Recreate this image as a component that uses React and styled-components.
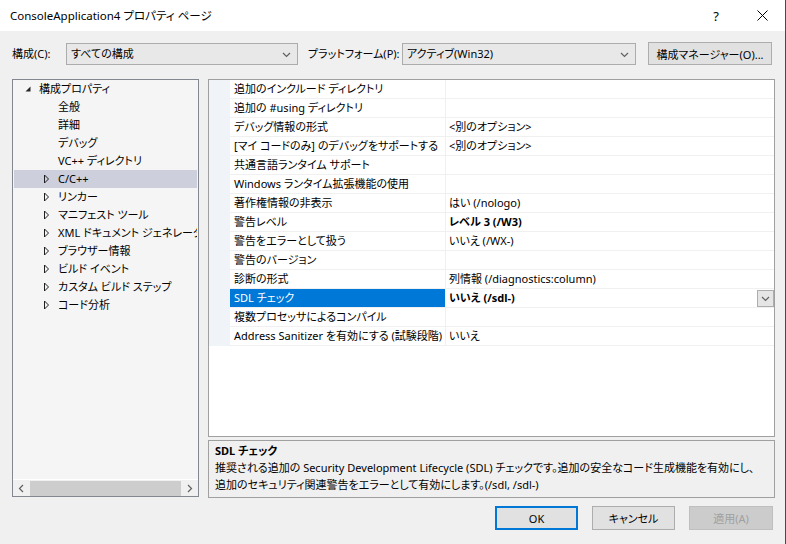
import React from "react";
import styled, { createGlobalStyle, css } from "styled-components";

const GlobalStyle = createGlobalStyle`
  html, body { margin: 0; padding: 0; background: #f0f0f0; }
  body {
    font-family: "Noto Sans", "Noto Sans CJK JP", sans-serif;
    font-size: 11px;
    color: #000;
    font-feature-settings: "palt";
  }
  * { box-sizing: border-box; }
`;

const Window = styled.div`
  width: 786px;
  height: 544px;
  background: #f0f0f0;
  display: flex;
  flex-direction: column;
  border-right: 1px solid #4a4a4a;
  overflow: hidden;
`;

const TitleBar = styled.div`
  height: 31px;
  background: #ffffff;
  display: flex;
  align-items: center;
  padding-left: 10px;
`;

const TitleText = styled.div`
  flex: 1;
  font-size: 11.5px;
  line-height: 16px;
`;

const TitleButton = styled.div`
  width: 46px;
  height: 31px;
  display: flex;
  align-items: center;
  justify-content: center;
  font-size: 13px;
  color: #000;
`;

const ConfigRow = styled.div`
  height: 48px;
  display: flex;
  align-items: flex-start;
  padding: 12px 12px 0 12px;
`;

const Label = styled.div`
  line-height: 22px;
  height: 22px;
  width: ${(p) => p.$w}px;
  white-space: nowrap;
`;

const Combo = styled.div`
  width: ${(p) => p.$w}px;
  height: 22px;
  background: #e8e8e8;
  border: 1px solid #acacac;
  display: flex;
  align-items: center;
  padding: 0 6px 0 4px;
  margin-right: ${(p) => p.$mr}px;
  flex: none;
`;

const ComboText = styled.div`
  flex: 1;
  line-height: 20px;
`;

const PushButton = styled.button`
  font: inherit;
  font-size: 11px;
  width: ${(p) => p.$w}px;
  height: ${(p) => p.$h || 24}px;
  margin-top: ${(p) => p.$mt || 0}px;
  background: #e1e1e1;
  border: 1px solid #adadad;
  color: #000;
  padding: 0;
  display: flex;
  align-items: center;
  justify-content: center;
  white-space: nowrap;
  flex: none;
  ${(p) =>
    p.$default &&
    css`
      border: 2px solid #0078d7;
    `}
  ${(p) =>
    p.$disabled &&
    css`
      background: #cccccc;
      border: 1px solid #bfbfbf;
      color: #a0a0a0;
    `}
`;

const Main = styled.div`
  height: 419px;
  display: flex;
  padding: 0 12px;
  gap: 9px;
`;

const TreePanel = styled.div`
  width: 187px;
  flex: none;
  height: 418px;
  border: 1px solid #828790;
  background: #f5f5f5;
  display: flex;
  flex-direction: column;
`;

const TreeList = styled.div`
  flex: 1;
  padding: 0 1px;
  overflow: hidden;
`;

const TreeRow = styled.div`
  height: 18px;
  display: flex;
  align-items: center;
  padding-left: ${(p) => 10 + p.$level * 19}px;
  background: ${(p) => (p.$selected ? "#cdd0dc" : "transparent")};
  white-space: nowrap;
  overflow: hidden;
`;

const Expander = styled.div`
  width: 15px;
  height: 18px;
  flex: none;
  display: flex;
  align-items: center;
`;

const TreeText = styled.span`
  line-height: 18px;
`;

const HScroll = styled.div`
  height: 17px;
  border-top: 1px solid #ffffff;
  background: #f0f0f0;
  display: flex;
  align-items: center;
`;

const ScrollArrow = styled.div`
  width: 17px;
  height: 16px;
  display: flex;
  align-items: center;
  justify-content: center;
  flex: none;
`;

const ScrollThumb = styled.div`
  flex: 1;
  height: 15px;
  background: #cdcdcd;
`;

const RightColumn = styled.div`
  width: 567px;
  flex: none;
  min-width: 0;
  display: flex;
  flex-direction: column;
  gap: 3px;
`;

const Grid = styled.div`
  height: 358px;
  border: 1px solid #a0a0a0;
  background: #ffffff;
  display: flex;
  flex-direction: column;
  overflow: hidden;
`;

const GridRow = styled.div`
  display: grid;
  grid-template-columns: 21px 216px minmax(0, 1fr);
  height: 19px;
`;

const MarginCell = styled.div`
  background: #f0f4f9;
`;

const Cell = styled.div`
  border-bottom: 1px solid #f0f0f0;
  line-height: 18px;
  white-space: nowrap;
  overflow: hidden;
  display: flex;
  align-items: center;
  min-width: 0;
`;

const NameCell = styled(Cell)`
  padding-left: 4px;
  border-right: 1px solid #f0f0f0;
  background: ${(p) => (p.$selected ? "#0078d7" : "#ffffff")};
  color: ${(p) => (p.$selected ? "#ffffff" : "#000000")};
`;

const ValueCell = styled(Cell)`
  padding-left: 3px;
  font-weight: ${(p) => (p.$bold ? 700 : 400)};
`;

const ValueText = styled.span`
  flex: 1;
`;

const DropButton = styled.div`
  width: 17px;
  height: 17px;
  background: #e5e5e5;
  border: 1px solid #adadad;
  display: flex;
  align-items: center;
  justify-content: center;
  flex: none;
`;

const Description = styled.div`
  height: 58px;
  border: 1px solid #a0a0a0;
  background: #f0f0f0;
  padding: 1px 6px;
  line-height: 17px;
  white-space: nowrap;
  overflow: hidden;
`;

const DescTitle = styled.div`
  font-weight: 700;
`;

const Footer = styled.div`
  display: flex;
  justify-content: flex-end;
  gap: 14px;
  padding: 8px 12px 0 0;
`;

const Chevron = ({ dir = "down", size = 8, color = "#606060" }) => {
  const d =
    dir === "down"
      ? "M1 3 L4.5 6.5 L8 3"
      : dir === "left"
      ? "M6 1 L2.5 4.5 L6 8"
      : "M3 1 L6.5 4.5 L3 8";
  return (
    <svg width={size + 1} height={size + 1} viewBox="0 0 9 9">
      <path d={d} fill="none" stroke={color} strokeWidth="1.2" />
    </svg>
  );
};

const ExpandedGlyph = () => (
  <svg width="8" height="8" viewBox="0 0 8 8">
    <path d="M6.5 1.5 L6.5 6.5 L1.5 6.5 Z" fill="#262626" />
  </svg>
);

const CollapsedGlyph = () => (
  <svg width="7" height="10" viewBox="0 0 7 10">
    <path d="M1.5 1 L5.5 5 L1.5 9 Z" fill="none" stroke="#1e1e1e" strokeWidth="1" />
  </svg>
);

const treeItems = [
  { text: "構成プロパティ", level: 0, exp: "open" },
  { text: "全般", level: 1 },
  { text: "詳細", level: 1 },
  { text: "デバッグ", level: 1 },
  { text: "VC++ ディレクトリ", level: 1 },
  { text: "C/C++", level: 1, exp: "closed", selected: true },
  { text: "リンカー", level: 1, exp: "closed" },
  { text: "マニフェスト ツール", level: 1, exp: "closed" },
  { text: "XML ドキュメント ジェネレーター", level: 1, exp: "closed" },
  { text: "ブラウザー情報", level: 1, exp: "closed" },
  { text: "ビルド イベント", level: 1, exp: "closed" },
  { text: "カスタム ビルド ステップ", level: 1, exp: "closed" },
  { text: "コード分析", level: 1, exp: "closed" },
];

const props = [
  { name: "追加のインクルード ディレクトリ", value: "" },
  { name: "追加の #using ディレクトリ", value: "" },
  { name: "デバッグ情報の形式", value: "<別のオプション>" },
  { name: "[マイ コードのみ] のデバッグをサポートする", value: "<別のオプション>" },
  { name: "共通言語ランタイム サポート", value: "" },
  { name: "Windows ランタイム拡張機能の使用", value: "" },
  { name: "著作権情報の非表示", value: "はい (/nologo)" },
  { name: "警告レベル", value: "レベル 3 (/W3)", bold: true },
  { name: "警告をエラーとして扱う", value: "いいえ (/WX-)" },
  { name: "警告のバージョン", value: "" },
  { name: "診断の形式", value: "列情報 (/diagnostics:column)" },
  { name: "SDL チェック", value: "いいえ (/sdl-)", bold: true, selected: true },
  { name: "複数プロセッサによるコンパイル", value: "" },
  { name: "Address Sanitizer を有効にする (試験段階)", value: "いいえ" },
];

export default function App() {
  return (
    <>
      <GlobalStyle />
      <Window>
        <TitleBar>
          <TitleText>ConsoleApplication4 プロパティ ページ</TitleText>
          <TitleButton>?</TitleButton>
          <TitleButton>
            <svg width="11" height="11" viewBox="0 0 11 11">
              <path d="M0.5 0.5 L10.5 10.5 M10.5 0.5 L0.5 10.5" stroke="#000" strokeWidth="1" />
            </svg>
          </TitleButton>
        </TitleBar>

        <ConfigRow>
          <Label $w={54}>構成(C):</Label>
          <Combo $w={232} $mr={10}>
            <ComboText>すべての構成</ComboText>
            <Chevron dir="down" />
          </Combo>
          <Label $w={94}>プラットフォーム(P):</Label>
          <Combo $w={234} $mr={12}>
            <ComboText>アクティブ(Win32)</ComboText>
            <Chevron dir="down" />
          </Combo>
          <PushButton $w={124} $h={23} $mt={-1}>構成マネージャー(O)...</PushButton>
        </ConfigRow>

        <Main>
          <TreePanel>
            <TreeList>
              {treeItems.map((t, i) => (
                <TreeRow key={i} $level={t.level} $selected={t.selected}>
                  <Expander>
                    {t.exp === "open" && <ExpandedGlyph />}
                    {t.exp === "closed" && <CollapsedGlyph />}
                  </Expander>
                  <TreeText>{t.text}</TreeText>
                </TreeRow>
              ))}
            </TreeList>
            <HScroll>
              <ScrollArrow>
                <Chevron dir="left" />
              </ScrollArrow>
              <ScrollThumb />
              <ScrollArrow>
                <Chevron dir="right" />
              </ScrollArrow>
            </HScroll>
          </TreePanel>

          <RightColumn>
            <Grid>
              {props.map((p, i) => (
                <GridRow key={i}>
                  <MarginCell />
                  <NameCell $selected={p.selected}>{p.name}</NameCell>
                  <ValueCell $bold={p.bold}>
                    <ValueText>{p.value}</ValueText>
                    {p.selected && (
                      <DropButton>
                        <Chevron dir="down" size={8} />
                      </DropButton>
                    )}
                  </ValueCell>
                </GridRow>
              ))}
            </Grid>
            <Description>
              <DescTitle>SDL チェック</DescTitle>
              <div>
                推奨される追加の Security Development Lifecycle (SDL) チェックです。追加の安全なコード生成機能を有効にし、
              </div>
              <div>追加のセキュリティ関連警告をエラーとして有効にします。(/sdl, /sdl-)</div>
            </Description>
          </RightColumn>
        </Main>

        <Footer>
          <PushButton $w={83} $default>OK</PushButton>
          <PushButton $w={83}>キャンセル</PushButton>
          <PushButton $w={84} $disabled>適用(A)</PushButton>
        </Footer>
      </Window>
    </>
  );
}
